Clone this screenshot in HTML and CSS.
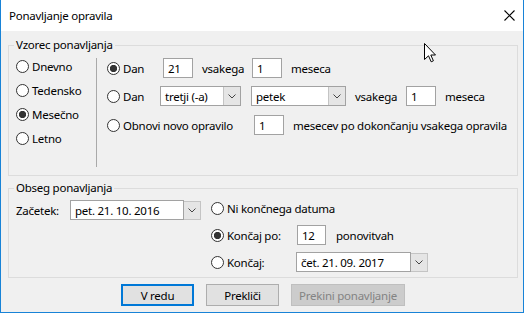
FILE: index.html
```html
<!DOCTYPE html>
<html lang="sl">
<head>
    <meta charset="UTF-8">
    <title>Ponavljanje opravila</title>
    <link rel="stylesheet" href="styles.css">
</head>
<body>
    <div class="window">
        <div class="titlebar">
            <span class="title">Ponavljanje opravila</span>
            <svg class="close" width="11" height="11" viewBox="0 0 11 11">
                <path d="M0.5 0.5 L10.5 10.5 M10.5 0.5 L0.5 10.5" stroke="#000" stroke-width="1.1" fill="none"/>
            </svg>
        </div>

        <div class="content">
            <!-- Vzorec -->
            <fieldset class="group group-pattern">
                <legend>Vzorec ponavljanja</legend>
                <div class="pattern">
                    <div class="kinds">
                        <label class="kind"><input type="radio" name="kind"> Dnevno</label>
                        <label class="kind"><input type="radio" name="kind"> Tedensko</label>
                        <label class="kind"><input type="radio" name="kind" checked> Mesečno</label>
                        <label class="kind"><input type="radio" name="kind"> Letno</label>
                    </div>
                    <div class="details">
                        <div class="row">
                            <label class="choice w-56"><input type="radio" name="month" checked> Dan</label>
                            <input class="field" type="text" value="21">
                            <span class="word w-50">vsakega</span>
                            <input class="field" type="text" value="1">
                            <span class="word">meseca</span>
                        </div>
                        <div class="row">
                            <label class="choice w-53"><input type="radio" name="month"> Dan</label>
                            <div class="combo w-81">
                                <span class="combo-text">tretji (-a)</span>
                                <span class="combo-btn"><svg width="8" height="5" viewBox="0 0 8 5"><path d="M0.5 0.5 L4 4 L7.5 0.5" stroke="#444" fill="none"/></svg></span>
                            </div>
                            <div class="combo w-95 gap-10">
                                <span class="combo-text">petek</span>
                                <span class="combo-btn"><svg width="8" height="5" viewBox="0 0 8 5"><path d="M0.5 0.5 L4 4 L7.5 0.5" stroke="#444" fill="none"/></svg></span>
                            </div>
                            <span class="word w-51">vsakega</span>
                            <input class="field" type="text" value="1">
                            <span class="word">meseca</span>
                        </div>
                        <div class="row row-last">
                            <label class="choice w-147"><input type="radio" name="month"> Obnovi novo opravilo</label>
                            <input class="field" type="text" value="1">
                            <span class="word">mesecev po dokončanju vsakega opravila</span>
                        </div>
                    </div>
                </div>
            </fieldset>

            <!-- Obseg -->
            <fieldset class="group group-range">
                <legend>Obseg ponavljanja</legend>
                <div class="range">
                    <div class="start">
                        <span class="start-label">Začetek:</span>
                        <div class="datebox w-114">
                            <span class="date-text">pet. 21. 10. 2016</span>
                        </div>
                        <span class="date-btn"><svg width="8" height="5" viewBox="0 0 8 5"><path d="M0.5 0.5 L4 4 L7.5 0.5" stroke="#444" fill="none"/></svg></span>
                    </div>
                    <div class="ends">
                        <div class="row">
                            <label class="choice"><input type="radio" name="end"> Ni končnega datuma</label>
                        </div>
                        <div class="row">
                            <label class="choice w-86"><input type="radio" name="end" checked> Končaj po:</label>
                            <input class="field w-29" type="text" value="12">
                            <span class="word gap-10">ponovitvah</span>
                        </div>
                        <div class="row">
                            <label class="choice w-85"><input type="radio" name="end"> Končaj:</label>
                            <div class="datebox w-115">
                                <span class="date-text">čet. 21. 09. 2017</span>
                            </div>
                            <span class="date-btn"><svg width="8" height="5" viewBox="0 0 8 5"><path d="M0.5 0.5 L4 4 L7.5 0.5" stroke="#444" fill="none"/></svg></span>
                        </div>
                    </div>
                </div>
            </fieldset>

            <div class="buttons">
                <button class="btn btn-default">V redu</button>
                <button class="btn">Prekliči</button>
                <button class="btn" disabled>Prekini ponavljanje</button>
            </div>
        </div>

        <svg class="cursor" width="13" height="20" viewBox="0 0 13 20">
            <path d="M0.5 0.5 L0.5 16.5 L4.5 12.8 L7.2 18.8 L9.4 17.8 L6.8 12 L11.5 12 Z" fill="#fff" stroke="#000" stroke-width="1" stroke-linejoin="miter"/>
        </svg>
    </div>
</body>
</html>
```

FILE: styles.css
```css
* {
    margin: 0;
    padding: 0;
    box-sizing: border-box;
}

body {
    font-family: 'Noto Sans', 'Liberation Sans', sans-serif;
    font-size: 11.5px;
    letter-spacing: -0.25px;
    color: #000;
    background: #f0f0f0;
}

.window {
    position: relative;
    width: 524px;
    height: 313px;
    border: 1px solid #1883d7;
    border-top: 0;
    background: #f0f0f0;
    display: flex;
    flex-direction: column;
}

/* naslovna vrstica */
.titlebar {
    height: 31px;
    background: #fff;
    display: flex;
    align-items: center;
    padding-left: 8px;
}

.close {
    margin-left: auto;
    margin-right: 8px;
}

.content {
    flex: 1;
    padding: 6px 5px 0 7px;
}

/* skupine */
.group {
    border: 1px solid #dcdcdc;
    min-width: 0;
}

.group legend {
    margin-left: 5px;
    padding: 0 2px;
    line-height: 16px;
}

.group-pattern {
    height: 139px;
}

.group-range {
    height: 98px;
    margin-top: 4px;
}

.pattern {
    display: flex;
    height: 121px;
    padding-top: 1px;
}

.kinds {
    flex: none;
    width: 87px;
    padding-left: 7px;
}

.kind {
    height: 24px;
    display: flex;
    align-items: center;
}

.details {
    flex: 1;
    min-width: 0;
    border-left: 1px solid #a9a9a9;
    margin: 4px 0 7px;
    padding-left: 10px;
    display: flex;
    flex-direction: column;
    gap: 8px;
}

.row {
    height: 20px;
    display: flex;
    align-items: center;
    white-space: nowrap;
}

.row-last {
    margin-top: 1px;
}

.choice {
    flex: none;
    display: flex;
    align-items: center;
}

/* radijski gumbi */
input[type="radio"] {
    appearance: none;
    -webkit-appearance: none;
    width: 13px;
    height: 13px;
    border: 1px solid #333;
    border-radius: 50%;
    background: #fff;
    margin-right: 3px;
    flex: none;
}

input[type="radio"]:checked {
    background: radial-gradient(circle, #333 0, #333 3.3px, #fff 4px);
}

/* polja */
.field {
    flex: none;
    width: 30px;
    height: 20px;
    border: 1px solid #a2a2a2;
    background: #fff;
    font: inherit;
    letter-spacing: inherit;
    color: #000;
    padding-left: 4px;
    outline: none;
}

.word {
    flex: none;
    margin-left: 9px;
}

.combo {
    flex: none;
    height: 20px;
    border: 1px solid #a2a2a2;
    background: #fff;
    display: flex;
    align-items: center;
}

.combo-text {
    flex: 1;
    padding-left: 4px;
}

.combo-btn {
    width: 17px;
    height: 18px;
    background: #e5e5e5;
    border-left: 1px solid #c4c4c4;
    display: flex;
    align-items: center;
    justify-content: center;
}

.datebox {
    flex: none;
    height: 20px;
    border: 1px solid #a2a2a2;
    background: #fff;
    display: flex;
    align-items: center;
    padding-left: 4px;
}

.date-btn {
    flex: none;
    width: 17px;
    height: 19px;
    background: #e5e5e5;
    border: 1px solid #c4c4c4;
    border-left: 0;
    display: flex;
    align-items: center;
    justify-content: center;
}

/* obseg */
.range {
    display: flex;
    padding-top: 2px;
}

.start {
    flex: none;
    display: flex;
    align-items: center;
    height: 20px;
    margin-top: 2px;
    padding-left: 7px;
}

.start-label {
    width: 54px;
}

.ends {
    margin-left: 10px;
    display: flex;
    flex-direction: column;
    gap: 7px;
}

/* sirine */
.w-29 { width: 29px; }
.w-50 { width: 50px; }
.w-51 { width: 51px; }
.w-53 { width: 53px; }
.w-56 { width: 56px; }
.w-81 { width: 81px; }
.w-85 { width: 85px; }
.w-86 { width: 86px; }
.w-95 { width: 95px; }
.w-114 { width: 114px; }
.w-115 { width: 115px; }
.w-147 { width: 147px; }
.gap-10 { margin-left: 10px; }

/* gumbi */
.buttons {
    display: flex;
    justify-content: center;
    gap: 12px;
    margin-top: 6px;
}

.btn {
    width: 73px;
    height: 22px;
    font: inherit;
    letter-spacing: inherit;
    color: #000;
    background: #e1e1e1;
    border: 1px solid #adadad;
}

.btn-default {
    border: 2px solid #0078d7;
}

.btn:disabled {
    width: 114px;
    background: #cccccc;
    border-color: #bfbfbf;
    color: #838383;
}

.cursor {
    position: absolute;
    left: 423px;
    top: 43px;
}
```
